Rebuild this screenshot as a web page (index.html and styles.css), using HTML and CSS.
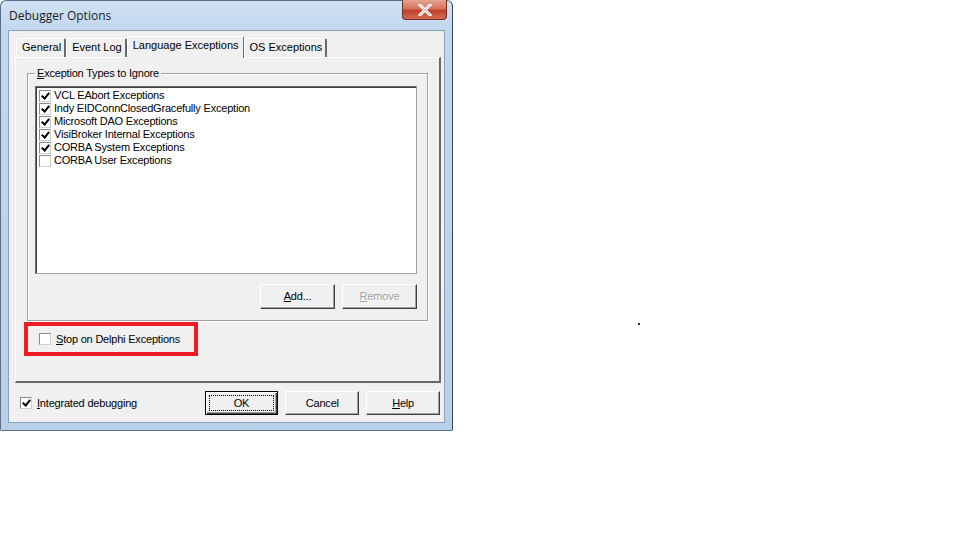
FILE: index.html
```html
<!DOCTYPE html>
<html lang="en">
 <head>
  <meta charset="utf-8">
  <title>Debugger Options</title>
  <link rel="stylesheet" href="styles.css">
 </head>
 <body>
  <div class="window">
	<div class="titlebar">
		<span class="title">Debugger Options</span>
		<div class="close">
			<svg width="16" height="12" viewBox="0 0 16 12"><path d="M3 1 L13 11 M13 1 L3 11" stroke="#fff" stroke-width="3" stroke-linecap="square"/><path d="M3 1 L13 11 M13 1 L3 11" stroke="#6a2a20" stroke-width="0.6" fill="none" opacity="0.5"/></svg>
		</div>
	</div>
	<div class="client">
		<div class="tabs">
			<div class="tab">General</div>
			<div class="tab">Event Log</div>
			<div class="tab on">Language Exceptions</div>
			<div class="tab">OS Exceptions</div>
		</div>
		<div class="page">
			<fieldset class="group">
				<legend><u>E</u>xception Types to Ignore</legend>
				<div class="list">
					<div class="item"><span class="chk on"></span>VCL EAbort Exceptions</div>
					<div class="item"><span class="chk on"></span>Indy EIDConnClosedGracefully Exception</div>
					<div class="item"><span class="chk on"></span>Microsoft DAO Exceptions</div>
					<div class="item"><span class="chk on"></span>VisiBroker Internal Exceptions</div>
					<div class="item"><span class="chk on"></span>CORBA System Exceptions</div>
					<div class="item"><span class="chk"></span>CORBA User Exceptions</div>
				</div>
				<div class="btnrow">
					<div class="btn"><u>A</u>dd...</div>
					<div class="btn off"><u>R</u>emove</div>
				</div>
			</fieldset>
			<div class="mark">
				<span class="chk"></span><u>S</u>top on Delphi Exceptions
			</div>
		</div>
		<div class="footer">
			<div class="opt"><span class="chk on"></span><u>I</u>ntegrated debugging</div>
			<div class="btn def"><span>OK</span></div>
			<div class="btn">Cancel</div>
			<div class="btn"><u>H</u>elp</div>
		</div>
	</div>
  </div>
  <div class="dot"></div>
 </body>
</html>
```
FILE: styles.css
```css
*{margin:0;padding:0;box-sizing:border-box;}
body{
	background:#fff;
	font-family:"Liberation Sans",Arial,sans-serif;
	font-size:11px;
	letter-spacing:-0.2px;
	color:#000;
}
u{text-decoration:underline;}
.window{
	width:453px;
	height:431px;
	border:1px solid #5d6f86;
	border-right-color:#3a4658;
	border-radius:6px 6px 2px 2px;
	background:linear-gradient(180deg,#cfe1f4 0px,#c2d8ee 30px,#b9d0e8 100%);
	padding:0 7px 7px 7px;
	display:flex;
	flex-direction:column;
}
.titlebar{
	height:29px;
	display:flex;
	align-items:center;
	justify-content:space-between;
	position:relative;
}
.title{
	font-family:"Open Sans","DejaVu Sans",sans-serif;
	font-size:12px;
	letter-spacing:0;
	color:#1e1e1e;
	padding-left:1px;
	margin-top:-1px;
}
.close{
	position:absolute;
	right:-2px;
	top:-1px;
	width:45px;
	height:20px;
	border:1px solid #6b3028;
	border-top:none;
	border-radius:0 0 4px 4px;
	background:linear-gradient(180deg,#e8a394 0%,#d7735f 45%,#c2422a 55%,#d56a52 100%);
	display:flex;
	align-items:center;
	justify-content:center;
}
.client{
	flex:1;
	background:#f0f0f0;
	border:1px solid #8aa0b8;
	display:flex;
	flex-direction:column;
	padding:0 4px 0 6px;
}
.tabs{
	display:flex;
	height:26px;
	align-items:flex-end;
	padding:4px 0 0 1px;
	letter-spacing:0;
}
.tab{
	height:19px;
	padding:0 3px 0 5px;
	line-height:17px;
	border-top:1px solid #fff;
	border-left:1px solid #fff;
	border-right:2px solid #696969;
	border-radius:2px 2px 0 0;
	color:#000;
}
.tab.on{
	height:22px;
	line-height:17px;
	padding:0 4px 0 5px;
	background:#f0f0f0;
	margin-bottom:-1px;
	position:relative;
	z-index:1;
	border-right-width:1px;
}
.page{
	width:426px;
	height:326px;
	border:1px solid #fff;
	border-right:2px solid #696969;
	border-bottom:2px solid #696969;
	padding:0 11px 0 8px;
	display:flex;
	flex-direction:column;
}
.group{
	margin:9px 0 0 3px;
	height:254px;
	border:1px solid #a0a0a0;
	box-shadow:1px 1px 0 #fff, inset 1px 1px 0 #fff;
	padding:0 10px 0 7px;
	display:flex;
	flex-direction:column;
}
.group legend{
	padding:0 2px;
	margin-left:0;
	line-height:13px;
}
.list{
	height:188px;
	background:#fff;
	border:1px solid #a0a0a0;
	border-top-color:#696969;
	border-left-color:#696969;
	box-shadow:inset 1px 1px 0 #404040;
	padding:2px 3px;
	margin-top:6px;
}
.item{
	height:13px;
	line-height:13px;
	display:flex;
	align-items:center;
	white-space:nowrap;
}
.chk{
	width:12px;
	height:12px;
	border:1px solid #8a8a8a;
	border-bottom-color:#cfcfcf;
	border-right-color:#cfcfcf;
	background:#fff;
	margin-right:3px;
	flex:none;
	position:relative;
}
.chk.on:after{
	content:"";
	position:absolute;
	left:3px;
	top:0px;
	width:3px;
	height:6px;
	border-right:2px solid #000;
	border-bottom:2px solid #000;
	transform:rotate(40deg);
}
.btnrow{
	display:flex;
	justify-content:flex-end;
	gap:7px;
	margin-top:10px;
}
.btn{
	width:75px;
	height:25px;
	background:#f0f0f0;
	border:1px solid #fff;
	border-right-color:#404040;
	border-bottom-color:#404040;
	box-shadow:inset -1px -1px 0 #a0a0a0;
	display:flex;
	align-items:center;
	justify-content:center;
	line-height:13px;
}
.btn.off{color:#a0a0a0;text-shadow:1px 1px 0 #fff;}
.mark{
	width:174px;
	height:34px;
	margin:1px 0 0 0;
	border:4px solid #ed1c24;
	display:flex;
	align-items:center;
	padding-left:11px;
	padding-bottom:1px;
}
.mark .chk{margin-right:5px;}
.footer{
	flex:1;
	display:flex;
	align-items:center;
	padding:1px 0 0 5px;
	gap:7px;
}
.opt{
	display:flex;
	align-items:center;
	width:178px;
}
.opt .chk{margin-right:5px;}
.footer .btn{width:74px;height:24px;}
.btn.def{
	border:1px solid #000;
	box-shadow:inset 1px 1px 0 #fff, inset -1px -1px 0 #404040, inset -2px -2px 0 #a0a0a0;
	padding:3px;
}
.btn.def span{
	width:100%;
	height:100%;
	border:1px dotted #000;
	display:flex;
	align-items:center;
	justify-content:center;
}
.dot{
	position:absolute;
	left:638px;
	top:323px;
	width:2px;
	height:2px;
	background:#333;
}
```
